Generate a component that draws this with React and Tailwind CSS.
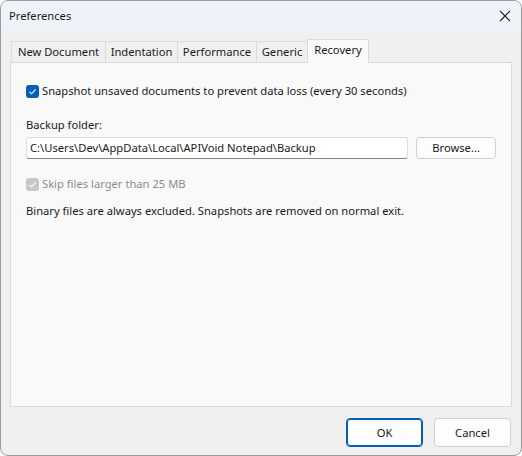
import React, { useState } from "react";

const font = { fontFamily: '"Segoe UI", "Noto Sans", "Liberation Sans", sans-serif' };

const tabs = [
  { name: "New Document", w: "w-[95px]" },
  { name: "Indentation", w: "w-[73px]" },
  { name: "Performance", w: "w-[80px]" },
  { name: "Generic", w: "w-[52px]" },
  { name: "Recovery", w: "w-[62px]" },
];

const Check = ({ checked, disabled }) => (
  <span
    className={`flex h-[13px] w-[13px] shrink-0 items-center justify-center rounded-[3px] ${
      disabled ? "bg-[#c7c7c7]" : "bg-[#005fb8]"
    }`}
  >
    {checked && (
      <svg width="9" height="9" viewBox="0 0 9 9">
        <path d="M1.5 4.8 L3.6 6.8 L7.6 2.4" fill="none" stroke="white" strokeWidth="1.1" />
      </svg>
    )}
  </span>
);

const App = () => {
  const [active, setActive] = useState("Recovery");

  return (
    <div className="h-[456px] w-[522px] text-[11.2px] leading-[16px] text-[#1a1a1a]" style={font}>
      <div className="flex h-full w-full flex-col overflow-hidden rounded-lg border border-[#9c9c9c] bg-[#f0f0f0]">
        {/* title bar */}
        <div className="flex h-[29px] shrink-0 items-center justify-between bg-[#eef3f9] px-[8px]">
          <span>Preferences</span>
          <svg width="12" height="12" viewBox="0 0 12 12" className="mr-[2px]">
            <path d="M1 1 L11 11 M11 1 L1 11" stroke="#222" strokeWidth="1.1" />
          </svg>
        </div>

        <div className="flex flex-1 flex-col px-[9px] pt-[10px]">
          {/* tabs */}
          <div className="flex h-[22px] items-end pl-[1px]">
            {tabs.map((t) => {
              const on = t.name === active;
              return (
                <button
                  key={t.name}
                  onClick={() => setActive(t.name)}
                  className={`${t.w} -mr-px flex items-start justify-center border border-b-0 border-[#dadada] ${
                    on
                      ? "relative z-10 -mb-px h-[24px] bg-[#f9f9f9] pt-[2px]"
                      : "h-[21px] bg-[#f0f0f0] pt-[2px]"
                  }`}
                >
                  {t.name}
                </button>
              );
            })}
          </div>

          {/* page */}
          <div className="h-[345px] border border-[#dadada] bg-[#f9f9f9] px-[15px] pt-[20px]">
            <label className="flex items-center gap-[3px]">
              <Check checked />
              <span>Snapshot unsaved documents to prevent data loss (every 30 seconds)</span>
            </label>

            <div className="mt-[18px]">Backup folder:</div>
            <div className="mt-[4px] flex items-center gap-[8px]">
              <div className="flex h-[22px] w-[383px] items-center rounded-[3px] border border-[#dcdcdc] border-b-[#868686] bg-white px-[3px]">
                C:\Users\Dev\AppData\Local\APIVoid Notepad\Backup
              </div>
              <button className="h-[22px] w-[80px] rounded-[4px] border border-[#d0d0d0] bg-[#fdfdfd]">
                Browse...
              </button>
            </div>

            <label className="mt-[17px] flex items-center gap-[3px] text-[#8c8c8c]">
              <Check checked disabled />
              <span>Skip files larger than 25 MB</span>
            </label>

            <p className="mt-[11px]">
              Binary files are always excluded. Snapshots are removed on normal exit.
            </p>
          </div>

          {/* footer */}
          <div className="mt-[11px] flex justify-end gap-[11px] pr-[1px]">
            <button className="h-[29px] w-[77px] rounded-[4px] border border-[#005fb8] bg-[#fdfdfd] shadow-[inset_0_0_0_1px_#005fb8]">
              OK
            </button>
            <button className="h-[29px] w-[77px] rounded-[4px] border border-[#d0d0d0] bg-[#fdfdfd]">
              Cancel
            </button>
          </div>
        </div>
      </div>
    </div>
  );
};

export default App;
